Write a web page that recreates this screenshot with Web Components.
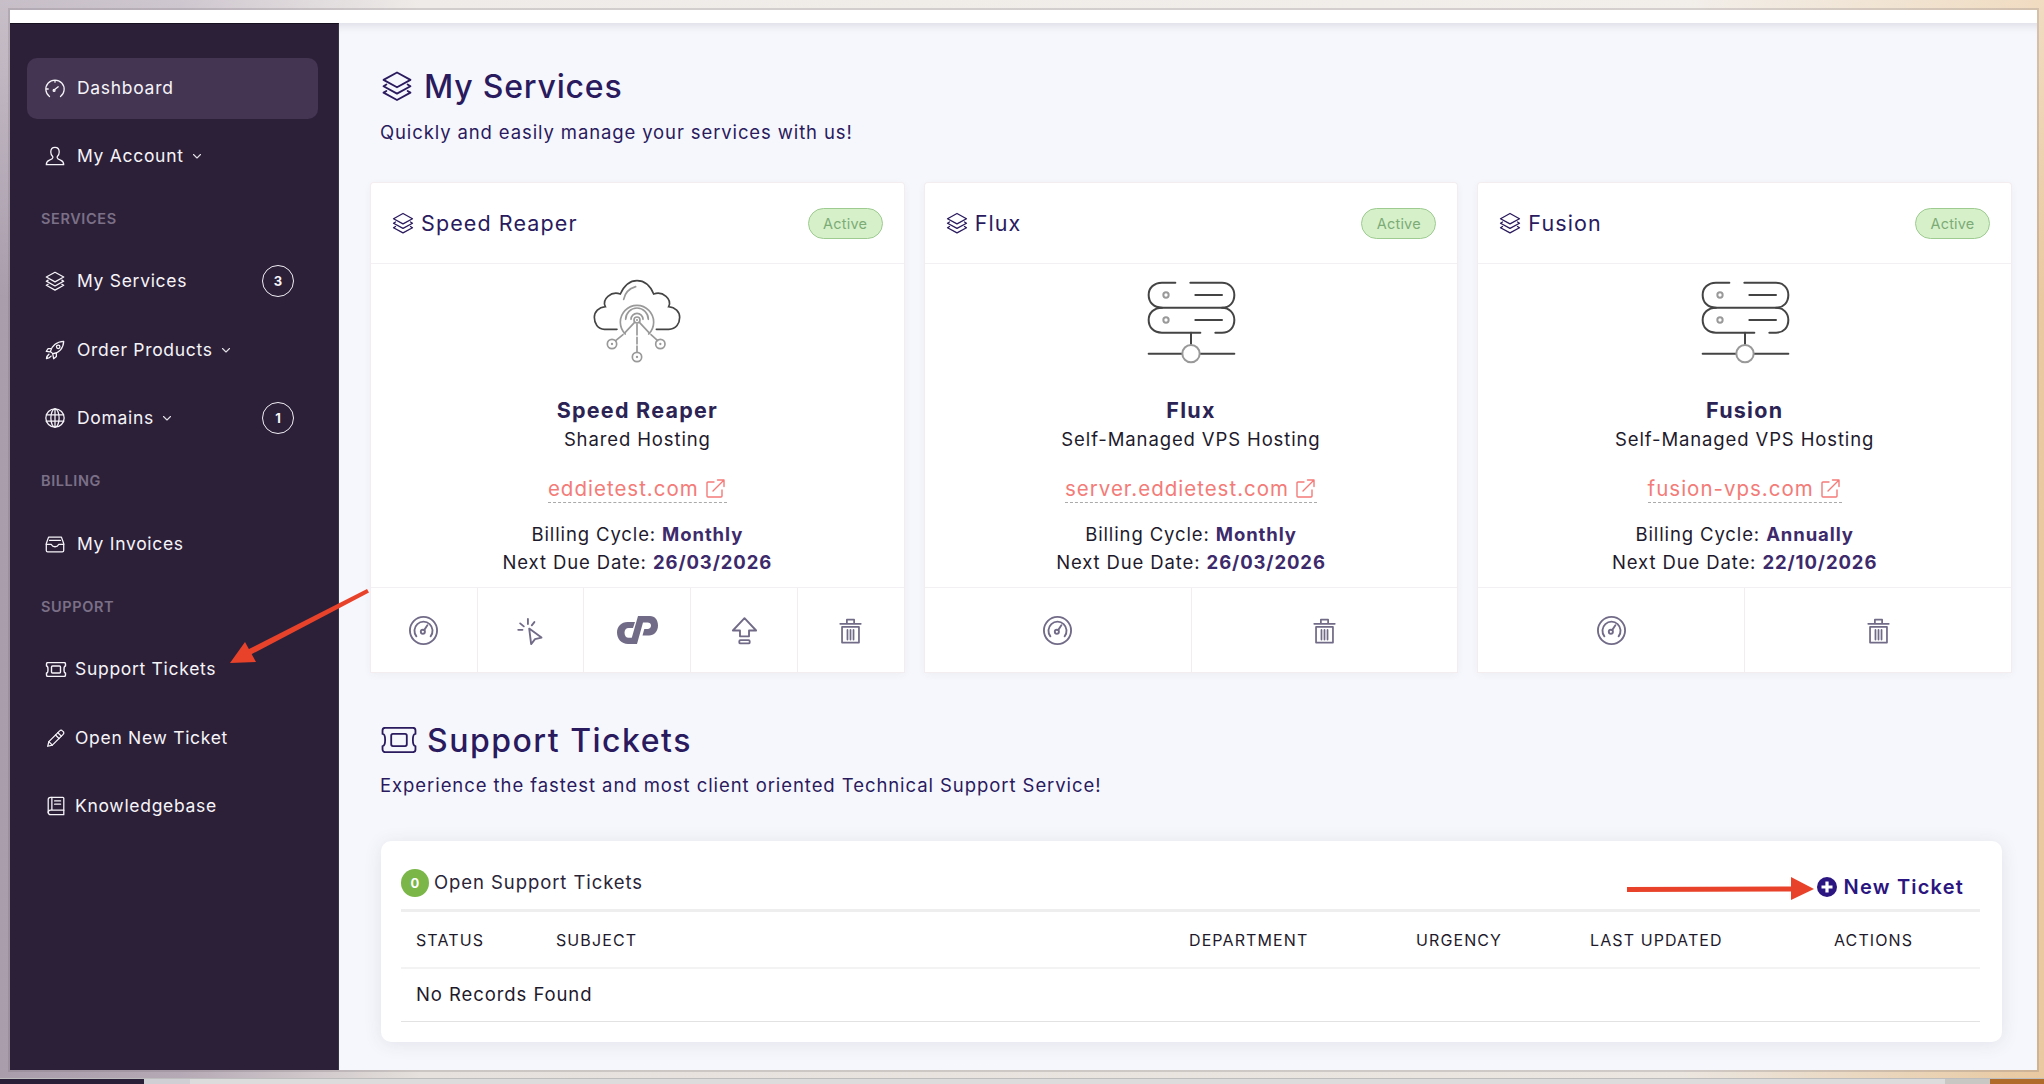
<!DOCTYPE html>
<html>
<head>
<meta charset="utf-8">
<title>My Services</title>
<style>
  html, body { margin: 0; height: 100%; }
  body {
    width: 2044px; height: 1084px; overflow: hidden; position: relative;
    font-family: "Inter", "Liberation Sans", sans-serif;
    background:
      linear-gradient(180deg, rgba(255,255,255,.35) 0, rgba(255,255,255,0) 300px),
      linear-gradient(90deg, #a99cab 0, #b5a9b5 180px, #e6e1dc 420px, #ebe6e0 1680px, #e9c9a0 2044px);
  }
</style>
</head>
<body>
<desk-window>
  <side-bar slot="side">
    <nav-item icon="gauge" active>Dashboard</nav-item>
    <nav-item icon="user" caret style="margin-top:6.5px">My Account</nav-item>
    <nav-label style="margin-top:22.5px">SERVICES</nav-label>
    <nav-item icon="layers" count="3" style="margin-top:21.5px">My Services</nav-item>
    <nav-item icon="rocket" caret style="margin-top:8px">Order Products</nav-item>
    <nav-item icon="globe" caret count="1" style="margin-top:7px">Domains</nav-item>
    <nav-label style="margin-top:22.5px">BILLING</nav-label>
    <nav-item icon="inbox" style="margin-top:22.5px">My Invoices</nav-item>
    <nav-label style="margin-top:22.5px">SUPPORT</nav-label>
    <nav-item icon="ticket" tight style="margin-top:21.5px">Support Tickets</nav-item>
    <nav-item icon="pencil" tight style="margin-top:8px">Open New Ticket</nav-item>
    <nav-item icon="book" tight style="margin-top:7px">Knowledgebase</nav-item>
  </side-bar>
  <section-head icon="layers" sub="Quickly and easily manage your services with us!">My Services</section-head>
  <card-row>
    <service-card name="Speed Reaper" plan="Shared Hosting" domain="eddietest.com" cycle="Monthly" due="26/03/2026" art="cloud" actions="speed,click,cpanel,up,trash"></service-card>
    <service-card name="Flux" plan="Self-Managed VPS Hosting" domain="server.eddietest.com" cycle="Monthly" due="26/03/2026" art="server" actions="speed,trash"></service-card>
    <service-card name="Fusion" plan="Self-Managed VPS Hosting" domain="fusion-vps.com" cycle="Annually" due="22/10/2026" art="server" actions="speed,trash"></service-card>
  </card-row>
  <section-head class="second" icon="ticket" sub="Experience the fastest and most client oriented Technical Support Service!">Support Tickets</section-head>
  <tickets-panel></tickets-panel>
</desk-window>
<desk-strip></desk-strip>
<note-arrows></note-arrows>

<script>
const ICONS = {
  gauge: '<path d="M6 20.2A10 10 0 1 1 18 20.2M4.6 12H2.4M12 4.5V2.2"/><path d="M11 13.2l4.5-3.6"/><circle cx="11" cy="13.5" r="1"/>',
  user: '<path d="M12 2.5c-2.8 0-4.6 2.2-4.6 5 0 2.2 1 4.2 2.2 5.2v1.2c0 1-1 1.5-3.6 2.5-2.5 1-3.5 2-3.5 5.1h19c0-3.1-1-4.1-3.5-5.1-2.6-1-3.6-1.5-3.6-2.5v-1.2c1.2-1 2.2-3 2.2-5.2 0-2.8-1.8-5-4.6-5z"/>',
  layers: '<path d="M12 2.5l9.5 5.2-9.5 5.2-9.5-5.2z"/><path d="M4.5 11l-2 1.2 9.5 5.2 9.5-5.2-2-1.2"/><path d="M4.5 15.5l-2 1.2 9.5 5.2 9.5-5.2-2-1.2"/>',
  rocket: '<path d="M9.5 16L7 13.5C8.3 8 13.5 2.8 21.5 2.5 21.2 10.5 16 15.7 9.5 16z"/><circle cx="15.5" cy="8.5" r="1.9"/><path d="M7.5 10.5H4.5L2.5 13.5l4.5.5M13.5 15.2V19l-3 2.5-1-5.5"/><path d="M5.5 16.5c-1.5 1-2.500 3-2.800 5 2-.3 4-1.300 5-2.800"/>',
  globe: '<circle cx="12" cy="12" r="10"/><ellipse cx="12" cy="12" rx="4.5" ry="10"/><path d="M12 2v20M2.500 8.500h19M2.500 15.500h19"/>',
  inbox: '<path d="M5 4.500h14l2.500 7v7.500a1.500 1.500 0 0 1-1.500 1.500H4A1.500 1.500 0 0 1 2.500 19v-7.500z"/><path d="M2.500 12.500h5.500c1.200 2.500 2.500 2.500 4 2.500s2.800 0 4-2.500h5.500"/><path d="M6 8h12"/>',
  ticket: '<path d="M2.500 8.500V6.500a1.500 1.500 0 0 1 1.500-1.500h16a1.500 1.500 0 0 1 1.500 1.500v2c-2 0-2 7 0 7v2a1.500 1.500 0 0 1-1.500 1.500H4a1.500 1.500 0 0 1-1.500-1.500v-2c2 0 2-7 0-7z"/><rect x="7.500" y="8.500" width="9" height="7" rx="1"/>',
  pencil: '<path d="M3 21l1.200-5L16 4.200a2 2 0 0 1 3 0l.8.8a2 2 0 0 1 0 3L8 19.800z"/><path d="M14 6.200l3.800 3.800M11.500 8.700l3.800 3.800M4.200 16l3.800 3.800"/>',
  book: '<path d="M6 2.500h13.500a1 1 0 0 1 1 1V21.500H6A2.500 2.500 0 0 1 3.500 19V5A2.500 2.500 0 0 1 6 2.500z"/><path d="M3.500 19a2.500 2.500 0 0 1 2.500-2.500h14.500M7.500 2.500v14M10.500 6.500h6.500M10.500 10h6.500"/>',
  caret: '<path d="M5 9l7 7 7-7"/>',
  external: '<path d="M11 5H5a1 1 0 0 0-1 1v13a1 1 0 0 0 1 1h13a1 1 0 0 0 1-1v-6"/><path d="M10 14L21 3M14.500 3H21v6.500"/>',
  speed: '<circle cx="12" cy="12" r="10.500"/><path d="M6.500 16.500a7 7 0 1 1 11 0"/><circle cx="11.500" cy="13" r="1.600"/><path d="M12.500 11.700L15 8"/>',
  click: '<path d="M11 10.500l9.500 7-5 1.200-3 3.800z"/><path d="M10 7V3M6.800 8.800L4 6.500M5.800 11.500H2.500M13 8l2-2.500"/>',
  up: '<path d="M12 2.500l9 9.500h-5.500v4.500h-7V12H3z"/><rect x="8" y="19.500" width="8" height="2.500" rx=".8"/>',
  trash: '<path d="M3.500 6.500h17M9 6.500V3h6v3.500M5 9h14v13H5zM9.500 11.500v8M12 11.500v8M14.500 11.500v8"/>'
};

function icon(name, size, sw) {
  // the ticket is wider than tall, so it gets its own box
  const box = name === 'ticket' ? `width="${size}" height="${Math.round(size * .69)}" viewBox="2 4.5 20 15"`
    : `width="${size}" height="${size}" viewBox="0 0 24 24"`;
  return `<svg ${box} fill="none" stroke="currentColor" stroke-width="${sw}" stroke-linejoin="round" stroke-linecap="round">${ICONS[name]}</svg>`;
}

const ART = {
  cloud: `<svg width="160" height="117" viewBox="-10 9 480 351" fill="none" stroke-linecap="round">
    <path stroke="#444" stroke-width="5" d="M170 208H132C112 208 102 190 102 172 102 155 115 142 135 140 124 118 152 92 180 102 192 76 210 62 230 62 252 62 270 78 280 102 308 92 336 118 325 140 345 142 358 155 358 172 358 190 348 208 325 208H288"/>
    <g stroke="#999" stroke-width="5">
      <path d="M190 118C194 98 206 86 226 80"/>
      <path d="M195 222A50 50 0 1 1 265 222"/>
      <path d="M196 178A34 34 0 0 1 264 178M212 178A18 18 0 0 1 248 178"/>
      <circle cx="230" cy="180" r="9"/>
      <path d="M222 188L192 220M238 188L268 220M230 192V225M230 232V252" />
      <path d="M188 224L166 242M272 224L292 242M230 258V276"/>
      <circle cx="155" cy="252" r="14"/><circle cx="300" cy="252" r="14"/><circle cx="230" cy="291" r="14"/>
    </g>
    <g fill="#999"><circle cx="155" cy="252" r="3.5"/><circle cx="300" cy="252" r="3.5"/><circle cx="230" cy="291" r="3.5"/><circle cx="230" cy="180" r="3"/></g>
  </svg>`,
  server: `<svg width="160" height="117" viewBox="-28 9 480 351" fill="none" stroke-linecap="round">
    <g stroke="#444" stroke-width="6">
      <path d="M165 68H125C100 68 85 85 85 105 85 127 100 143 125 143H305C328 143 342 127 342 105 342 85 328 68 305 68H210"/>
      <path d="M125 143C100 143 85 160 85 180 85 202 100 218 125 218H240M285 218H305C328 218 342 202 342 180 342 160 328 143 305 143"/>
      <path d="M225 105H305M225 180H305M212 218V255M85 281H185M240 281H342"/>
    </g>
    <g stroke="#999" stroke-width="6"><circle cx="137" cy="105" r="8"/><circle cx="137" cy="180" r="8"/><circle cx="212" cy="281" r="26"/></g>
  </svg>`
};

class DeskWindow extends HTMLElement {
  constructor() {
    super();
    this.attachShadow({mode: 'open'}).innerHTML = `
      <style>
        :host {
          display: flex; flex-direction: column;
          width: 2027px; height: 1060px; margin: 10px 0 0 10px;
          outline: 2px solid rgba(110,100,110,.22); color: #2a1a5e;
        }
        .bar { height: 13px; background: #fff; flex: none; }
        .body { flex: 1; display: flex; min-height: 0; }
        main {
          flex: 1; background: #f6f7fc; min-width: 0;
          padding: 43px 26px 0 32px; box-sizing: border-box;
          box-shadow: inset 0 10px 10px -8px rgba(40,40,70,.14);
        }
      </style>
      <div class="bar"></div>
      <div class="body"><slot name="side"></slot><main><slot></slot></main></div>`;
  }
}

class SideBar extends HTMLElement {
  constructor() {
    super();
    this.attachShadow({mode: 'open'}).innerHTML = `
      <style>
        :host {
          display: flex; flex-direction: column; flex: none; box-sizing: border-box;
          width: 329px; padding: 34px 20px 0 17px; background: #2c2039;
          border-top: 1px solid #17101f; border-right: 1px solid #39353f;
        }
      </style>
      <slot></slot>`;
  }
}

class NavItem extends HTMLElement {
  constructor() {
    super();
    const caret = this.hasAttribute('caret') ? `<span class="caret">${icon('caret', 12, 2.2)}</span>` : '';
    const count = this.getAttribute('count');
    const tight = this.hasAttribute('tight');
    this.attachShadow({mode: 'open'}).innerHTML = `
      <style>
        :host {
          display: flex; align-items: center; height: 61px; flex: none; box-sizing: border-box;
          padding: 0 24px 0 ${tight ? 18 : 17}px; border-radius: 10px;
          font-size: 17.5px; letter-spacing: .7px; color: #f6f4f8; font-weight: 400;
        }
        :host([active]) { background: #443553; }
        svg { display: block; }
        .ico { margin-right: ${tight ? 8 : 11}px; }
        .txt { margin-top: -2px; }
        .caret { margin-left: 7px; opacity: .9; }
        .count {
          margin-left: auto; width: 32px; height: 32px; box-sizing: border-box; border-radius: 50%;
          border: 1.5px solid #f1eef4; display: flex; align-items: center; justify-content: center;
          font-size: 13px; font-weight: 700; letter-spacing: 0;
        }
      </style>
      <span class="ico">${icon(this.getAttribute('icon'), 22, 1.4)}</span><span class="txt"><slot></slot></span>${caret}
      ${count ? `<span class="count">${count}</span>` : ''}`;
  }
}

class NavLabel extends HTMLElement {
  constructor() {
    super();
    this.attachShadow({mode: 'open'}).innerHTML = `
      <style>
        :host {
          display: block; height: 20px; line-height: 20px; flex: none; padding-left: 14px;
          font-size: 14.5px; font-weight: 600; color: #7b7087; letter-spacing: .6px;
        }
      </style>
      <slot></slot>`;
  }
}

class SectionHead extends HTMLElement {
  constructor() {
    super();
    const second = this.classList.contains('second');
    this.attachShadow({mode: 'open'}).innerHTML = `
      <style>
        :host { display: block; margin-left: 9px; color: #2a1a5e; }
        :host(.second) { margin-top: 48px; }
        h1 {
          margin: 0; display: flex; align-items: center; gap: 10px; height: 40px;
          font-size: 32px; font-weight: 500; letter-spacing: .8px;
        }
        :host(.second) h1 { letter-spacing: 1.5px; gap: 9px; }
        svg { display: block; }
        p { margin: 13px 0 0; line-height: 26px; font-size: 18.5px; letter-spacing: .88px; }
        :host(.second) p { margin-top: 12px; letter-spacing: .93px; }
      </style>
      <h1>${second ? icon('ticket', 38, 1.05) : icon('layers', 34, 1.3)}<slot></slot></h1>
      <p>${this.getAttribute('sub')}</p>`;
  }
}

class CardRow extends HTMLElement {
  constructor() {
    super();
    this.attachShadow({mode: 'open'}).innerHTML = `
      <style>
        :host { display: grid; grid-template-columns: repeat(3, 1fr); gap: 21px; margin-top: 38px; }
      </style>
      <slot></slot>`;
  }
}

class StatusPill extends HTMLElement {
  constructor() {
    super();
    this.attachShadow({mode: 'open'}).innerHTML = `
      <style>
        :host {
          display: flex; align-items: center; justify-content: center; flex: none;
          width: 75px; height: 31px; box-sizing: border-box; border-radius: 16px;
          background: #d6f1ca; border: 1px solid #9dcb90; color: #7dab76;
          font-size: 14.5px; letter-spacing: .2px;
        }
      </style>
      <slot></slot>`;
  }
}

class ServiceCard extends HTMLElement {
  constructor() {
    super();
    const a = n => this.getAttribute(n);
    const cells = a('actions').split(',').map(n => {
      if (n === 'cpanel') {
        return `<div class="cell"><svg width="41" height="28" viewBox="0 0 41 28" fill="#726b88">
          <path d="M18 6H10.5C4.5 6 0 10.5 0 16.5 0 23 4.5 28 11 28h3l1.800-6.200H11.500c-2.200 0-4-2-4-5s1.800-4.800 4-4.800h4.500z"/>
          <path d="M21 0h12c5 0 8 4 8 9.500 0 6-4 10-9 10h-6.500l1.800-6.500H30.500c2 0 3.500-1.500 3.500-3.500S32.500 6.500 30.500 6.500h-4.500l-6 21.500H13z"/>
        </svg></div>`;
      }
      return `<div class="cell">${icon(n, n === 'trash' ? 29 : 31, 1.45)}</div>`;
    }).join('');
    this.attachShadow({mode: 'open'}).innerHTML = `
      <style>
        :host {
          display: block; background: #fff; border-radius: 3px 3px 0 0; text-align: center;
          box-shadow: 0 0 0 1px #f3edef, 0 2px 8px rgba(60,60,90,.06); color: #1e1a2c;
          font-size: 18.5px; letter-spacing: .88px;
        }
        header {
          display: flex; align-items: center; height: 81px; box-sizing: border-box;
          padding: 0 21px 0 20px; border-bottom: 1px solid #f2f0f2;
        }
        h3 {
          margin: 0 auto 0 6px; font-size: 21.5px; font-weight: 400; letter-spacing: 1.1px; color: #2a1a5e;
          line-height: 28px;
        }
        header svg { display: block; color: #2a1a5e; }
        .art { display: block; margin: -1px auto 0; }
        .art svg { display: block; margin: 0 auto; }
        .name { margin: 16px 0 0; font-size: 21.5px; font-weight: 700; line-height: 28px; color: #2c2355; letter-spacing: 1.25px; }
        .plan { line-height: 28px; margin-top: 1px; }
        .link {
          display: inline-flex; align-items: center; gap: 4px; margin-top: 22px; height: 27px;
          color: #f37b78; font-size: 20.5px; border-bottom: 1px dashed #aaa; letter-spacing: 1px;
        }
        .link svg { display: block; }
        .info { margin-top: 17px; line-height: 28px; }
        b { font-weight: 700; color: #3d2a6b; letter-spacing: .9px; }
        .actions { display: flex; margin-top: 11px; border-top: 1px solid #f2f0f2; height: 85px; box-sizing: border-box; }
        .cell { flex: 1; display: flex; align-items: center; justify-content: center; color: #726b88; border-left: 1px solid #f2edef; }
        .cell:first-child { border-left: 0; }
      </style>
      <header>${icon('layers', 24, 1.3)}<h3>${a('name')}</h3><status-pill>Active</status-pill></header>
      <div class="art">${ART[a('art')]}</div>
      <div class="name">${a('name')}</div>
      <div class="plan">${a('plan')}</div>
      <div class="link">${a('domain')}${icon('external', 24, 1.4)}</div>
      <div class="info">Billing Cycle: <b>${a('cycle')}</b><br>Next Due Date: <b>${a('due')}</b></div>
      <div class="actions">${cells}</div>`;
  }
}

class TicketsPanel extends HTMLElement {
  constructor() {
    super();
    this.attachShadow({mode: 'open'}).innerHTML = `
      <style>
        :host {
          display: block; margin: 43px 9px 0 10px; height: 201px; box-sizing: border-box;
          padding: 0 22px 0 20px; background: #fff; border-radius: 10px;
          box-shadow: 0 2px 18px rgba(60,60,90,.1); color: #1e1a2c;
          font-size: 18.5px; letter-spacing: .92px;
        }
        .top {
          display: flex; height: 71px; box-sizing: border-box; padding-top: 28px;
          border-bottom: 3px solid #eeeeee;
        }
        .dot {
          width: 28px; height: 28px; border-radius: 50%; background: #7ab648; color: #fff; flex: none;
          display: flex; align-items: center; justify-content: center; font-size: 13px; font-weight: 700;
          letter-spacing: 0;
        }
        .title { margin-left: 5px; line-height: 26px; color: #2a2438; }
        .new {
          margin-left: auto; margin-right: 16px; display: flex; align-items: center; gap: 7px; height: 26px; margin-top: 5px;
          color: #2b1580; font-size: 20px; font-weight: 600; letter-spacing: 1.2px;
        }
        .plus { display: block; }
        .grid { display: grid; grid-template-columns: 140px 633px 227px 174px 244px 1fr; padding-left: 15px; }
        .head { height: 57px; align-items: center; border-bottom: 2px solid #f3f3f3; box-sizing: border-box; font-size: 16px; font-weight: 400; letter-spacing: 1.1px; }
        .row { height: 53px; line-height: 51px; box-sizing: border-box; padding-left: 15px; border-bottom: 1px solid #e2e2e2; }
      </style>
      <div class="top">
        <span class="dot">0</span><span class="title">Open Support Tickets</span>
        <span class="new">
          <svg class="plus" width="20" height="20" viewBox="0 0 20 20"><circle cx="10" cy="10" r="10" fill="#2b1580"/><path d="M10 4.500v11M4.500 10h11" stroke="#fff" stroke-width="3.200"/></svg>
          New Ticket
        </span>
      </div>
      <div class="grid head"><span>STATUS</span><span>SUBJECT</span><span>DEPARTMENT</span><span>URGENCY</span><span>LAST UPDATED</span><span>ACTIONS</span></div>
      <div class="row">No Records Found</div>`;
  }
}

// what shows of the desktop under the window
class DeskStrip extends HTMLElement {
  constructor() {
    super();
    this.attachShadow({mode: 'open'}).innerHTML = `
      <style>
        :host { display: flex; position: absolute; left: 0; right: 0; top: 1078px; height: 6px; background: #dcdcdc; border-top: 1px solid #bdbdbd; box-sizing: border-box; }
        .a { width: 144px; background: #2a1f38; }
        .b { width: 46px; background: #cfcfd4; }
        .c { margin-left: auto; width: 45px; background: #c9c7c4; }
        .d { width: 54px; background: #b06a2a; }
      </style>
      <div class="a"></div><div class="b"></div><div class="c"></div><div class="d"></div>`;
  }
}

// the red arrows drawn on top of the screenshot
class NoteArrows extends HTMLElement {
  constructor() {
    super();
    this.attachShadow({mode: 'open'}).innerHTML = `
      <style>:host { position: absolute; left: 0; top: 0; pointer-events: none; } svg { display: block; }</style>
      <svg width="2044" height="1084" viewBox="0 0 2044 1084">
        <path d="M367 589L369 592.500 250 655 247 650z" fill="#e8432a"/>
        <path d="M230 663L245 642 256 662z" fill="#e8432a"/>
        <path d="M1627 887L1795 886.500V891.500L1627 892z" fill="#e8432a"/>
        <path d="M1814 889L1791 877V900z" fill="#e8432a"/>
      </svg>`;
  }
}

customElements.define('desk-window', DeskWindow);
customElements.define('side-bar', SideBar);
customElements.define('nav-item', NavItem);
customElements.define('nav-label', NavLabel);
customElements.define('section-head', SectionHead);
customElements.define('card-row', CardRow);
customElements.define('status-pill', StatusPill);
customElements.define('service-card', ServiceCard);
customElements.define('tickets-panel', TicketsPanel);
customElements.define('desk-strip', DeskStrip);
customElements.define('note-arrows', NoteArrows);
</script>
</body>
</html>
